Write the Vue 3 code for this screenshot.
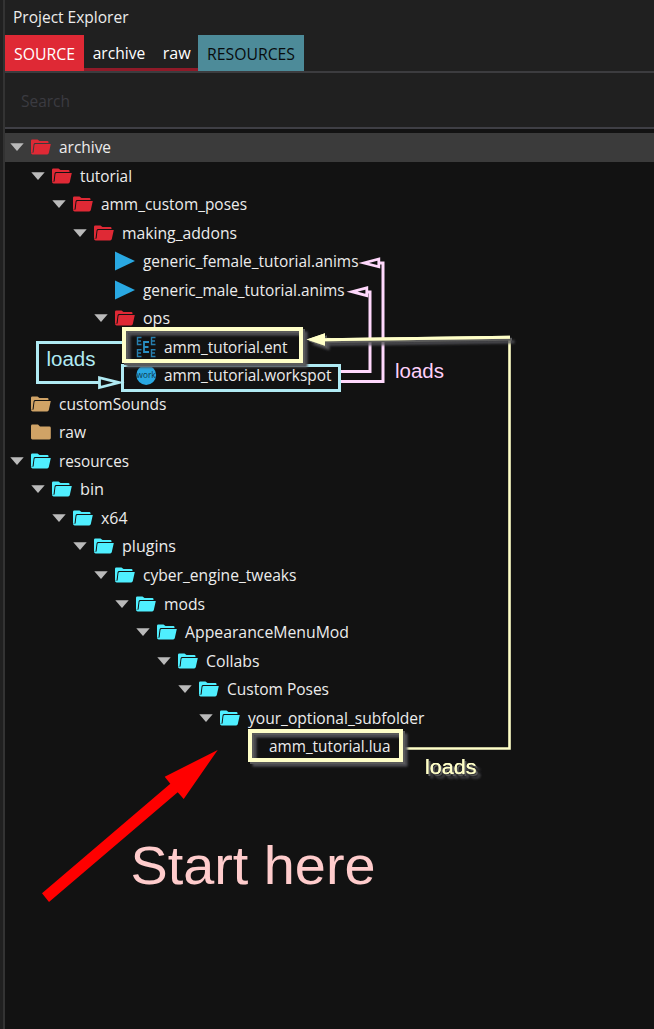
<script setup>
const rows = [
  { level: 0, label: 'archive', width: 52, icon: 'open', tone: 'red', arrow: true, selected: true },
  { level: 1, label: 'tutorial', width: 52, icon: 'open', tone: 'red', arrow: true },
  { level: 2, label: 'amm_custom_poses', width: 146, icon: 'open', tone: 'red', arrow: true },
  { level: 3, label: 'making_addons', width: 115, icon: 'open', tone: 'red', arrow: true },
  { level: 4, label: 'generic_female_tutorial.anims', width: 215.5, icon: 'play' },
  { level: 4, label: 'generic_male_tutorial.anims', width: 201.5, icon: 'play' },
  { level: 4, label: 'ops', width: 27, icon: 'open', tone: 'red', arrow: true },
  { level: 5, label: 'amm_tutorial.ent', width: 123.5, icon: 'entity' },
  { level: 5, label: 'amm_tutorial.workspot', width: 167.5, icon: 'work' },
  { level: 0, label: 'customSounds', width: 107.5, icon: 'open', tone: 'tan' },
  { level: 0, label: 'raw', width: 27, icon: 'folder', tone: 'tan' },
  { level: 0, label: 'resources', width: 70, icon: 'open', tone: 'cyan', arrow: true },
  { level: 1, label: 'bin', width: 24, icon: 'open', tone: 'cyan', arrow: true },
  { level: 2, label: 'x64', width: 26.5, icon: 'open', tone: 'cyan', arrow: true },
  { level: 3, label: 'plugins', width: 54, icon: 'open', tone: 'cyan', arrow: true },
  { level: 4, label: 'cyber_engine_tweaks', width: 153.5, icon: 'open', tone: 'cyan', arrow: true },
  { level: 5, label: 'mods', width: 41, icon: 'open', tone: 'cyan', arrow: true },
  { level: 6, label: 'AppearanceMenuMod', width: 164, icon: 'open', tone: 'cyan', arrow: true },
  { level: 7, label: 'Collabs', width: 53.5, icon: 'open', tone: 'cyan', arrow: true },
  { level: 8, label: 'Custom Poses', width: 102, icon: 'open', tone: 'cyan', arrow: true },
  { level: 9, label: 'your_optional_subfolder', width: 176.5, icon: 'open', tone: 'cyan', arrow: true },
  { level: 10, label: 'amm_tutorial.lua', width: 121.5, icon: 'none' },
]
const tabs = [
  { label: 'SOURCE', kind: 'source', width: 61, x: 0, base: 24.5 },
  { label: 'archive', kind: 'sub', width: 52.5, x: 0.7, base: 24 },
  { label: 'raw', kind: 'sub', width: 28, x: 0.7, base: 24 },
  { label: 'RESOURCES', kind: 'resources', width: 88, x: 0, base: 24.5 },
]
</script>

<template>
  <div class="window">
    <div class="panel">
      <header class="title">
        <svg class="text" width="118" height="35"><text x="0" y="22.7" textLength="115.5" lengthAdjust="spacingAndGlyphs">Project Explorer</text></svg>
      </header>
      <nav class="tabs">
        <div v-for="t in tabs" :key="t.label" class="tab" :class="t.kind">
          <svg class="text" :width="t.width" height="36"><text :x="t.x" :y="t.base" :textLength="t.width" lengthAdjust="spacingAndGlyphs">{{ t.label }}</text></svg>
        </div>
      </nav>
      <div class="search">
        <svg class="text" width="50" height="54"><text x="0" y="34" textLength="49" lengthAdjust="spacingAndGlyphs">Search</text></svg>
      </div>
      <div class="tree">
        <div v-for="r in rows" :key="r.label" class="row" :class="{ selected: r.selected }" :style="{ paddingLeft: 5 + r.level * 21 + 'px' }">
          <svg class="arrow" width="14" height="8" viewBox="0 0 14 8"><path v-if="r.arrow" d="M.3 .3H13.7L7 8Z" /></svg>
          <svg class="icon" :class="r.tone" width="20" height="20" viewBox="0 0 20 20">
            <g v-if="r.icon === 'open'">
              <path d="M0 15.8V3.8Q0 2.5 1.3 2.5H6.5L8.5 4.1H16.4Q17.5 4.1 17.5 5.2V5.9H4.3Q2.8 5.9 2.6 7.3L1.5 15.8Z" />
              <path d="M4.6 7H19.8L17.8 16Q17.5 17.4 16.2 17.4H1.6Q.3 17.4 0 16L2.6 15.4L3.4 8.2Q3.5 7 4.6 7Z" />
            </g>
            <path v-else-if="r.icon === 'folder'" d="M0 4Q0 2.6 1.4 2.6H7L9 4.5H18.4Q19.8 4.5 19.8 5.9V16Q19.8 17.4 18.4 17.4H1.4Q0 17.4 0 16Z" />
            <path v-else-if="r.icon === 'play'" class="blue" d="M0 .6L20 10.1L0 19.6Z" />
            <g v-else-if="r.icon === 'entity'" class="entity">
              <path d="M5.5 .5H1.5V7.5H5.5M1.5 4H5M19.5 .5H15.5V7.5H19.5M15.5 4H19M5.5 12.7H1.5V19.5H5.5M1.5 16H5M19.5 12.7H15.5V19.5H19.5M15.5 16H19" />
              <path d="M13 5H8V15H13M8 10H12.5" />
            </g>
            <g v-else-if="r.icon === 'work'">
              <circle class="blue" cx="10.2" cy="10" r="9.9" />
              <text class="work" x="0.6" y="12.8" textLength="19" lengthAdjust="spacingAndGlyphs">work</text>
            </g>
          </svg>
          <svg class="text label" :width="r.width + 2" height="28"><text x="0" y="19.7" :textLength="r.width" lengthAdjust="spacingAndGlyphs">{{ r.label }}</text></svg>
        </div>
      </div>
    </div>

    <svg class="notes" width="654" height="1029" viewBox="0 0 654 1029">
      <defs>
        <filter id="shade" filterUnits="userSpaceOnUse" x="0" y="300" width="654" height="500">
          <feDropShadow in="SourceGraphic" dx="2" dy="2" stdDeviation="0.6" flood-color="#5a5a5a" result="a" />
          <feDropShadow in="SourceGraphic" dx="4.5" dy="4.5" stdDeviation="1" flood-color="#505054" result="b" />
          <feMerge><feMergeNode in="b" /><feMergeNode in="a" /></feMerge>
        </filter>
      </defs>
      <g class="line sky">
        <path d="M122 342.5H37.5V382.5H99" />
        <path class="head" d="M99.5 377.7V387.5L119 382.6Z" />
        <rect x="122.5" y="365.5" width="217" height="25" />
      </g>
      <g class="line pink">
        <path d="M341 371.5H370V292H367" />
        <path d="M341 381.5H383V263H379" />
        <path class="head" d="M378.8 259V266.8L364 263Z" />
        <path class="head" d="M366.8 287.8V295.6L352 291.7Z" />
      </g>
      <path class="line cream thin" d="M403 748.5H509.5V338" />
      <g filter="url(#shade)">
        <path class="line cream" d="M324 339.7L510 337.3" />
        <path class="cream-fill" d="M306.7 339.5L325 333.3V345.7Z" />
        <rect class="line cream thick" x="124" y="329" width="177" height="32" />
        <rect class="line cream thick" x="250" y="731" width="151" height="29" />
        <text class="cream-fill" x="425" y="773.5" textLength="51.5" lengthAdjust="spacingAndGlyphs">loads</text>
      </g>
      <text class="sky-fill" x="46.5" y="365.5" textLength="49" lengthAdjust="spacingAndGlyphs">loads</text>
      <text class="pink-fill" x="395" y="378" textLength="49" lengthAdjust="spacingAndGlyphs">loads</text>
      <path class="start-arrow" d="M217.7 750L183.7 799L177.7 792.3L49 902L42 893.3L170.3 783.7L164.7 776.7Z" />
      <text class="start" x="130.5" y="883.8" textLength="245" lengthAdjust="spacingAndGlyphs">Start here</text>
    </svg>
  </div>
</template>

<style>
body { margin: 0; background: #121212; }
</style>

<style scoped>
.window { position: relative; box-sizing: border-box; width: 654px; height: 1029px; padding-left: 3px; overflow: hidden; background: #202020; }
.panel { box-sizing: border-box; height: 100%; border-left: 2px solid #333; background: #121212; }
svg { display: block; flex: none; }
.text { overflow: visible; font: 16px "Open Sans", "Noto Sans", sans-serif; fill: #ececec; }
.title { height: 35px; padding-left: 7.5px; background: #202020; }
.tabs { display: flex; height: 36px; background: #202020; border-bottom: 2px solid #3c3c3f; }
.tab { box-sizing: border-box; height: 36px; padding: 0 9px; }
.sub { border-bottom: 3px solid #8f1a28; padding: 0 8.4px; }
.source { background: #df2935; }
.source .text, .sub .text { fill: #fff; }
.resources { background: #4d8b99; }
.resources .text { fill: #080c0d; }
.search { height: 54px; padding-left: 16px; background: #202020; border-bottom: 2px solid #3f3f45; }
.search .text { fill: #3b3b41; }
.tree { padding-top: 4px; }
.row { box-sizing: border-box; display: flex; align-items: center; height: 28.53px; }
.selected { background: #3b3b3b; }
.arrow { margin-right: 7px; fill: #bababa; }
.label { margin-left: 7.5px; }
.red { fill: #df2935; }
.tan { fill: #d0a366; }
.cyan { fill: #4fefff; }
.blue { fill: #29a8e2; }
.entity path { fill: none; stroke: #277fae; stroke-width: 1.4; }
.entity path + path { stroke: #2a90c4; stroke-width: 1.8; }
.icon { overflow: visible; }
.work { font: 9.5px "Open Sans", sans-serif; fill: #10384b; }
.notes { position: absolute; left: 0; top: 0; font: 20px "Liberation Sans", Arial, sans-serif; }
.line { fill: none; stroke-width: 3; }
.head { stroke-width: 2.8; stroke-miterlimit: 10; }
.sky { stroke: #b0eaf3; }
.sky-fill { fill: #b0eaf3; }
.pink { stroke: #ffd8fc; }
.pink-fill { fill: #ffd0fa; }
.cream { stroke: #ffffc8; }
.cream-fill { fill: #ffffc8; }
.thin { stroke-width: 2.6; }
.thick { stroke-width: 4; }
.start-arrow { fill: #f00; }
.start { font-size: 54px; fill: #ffcccc; }
</style>
